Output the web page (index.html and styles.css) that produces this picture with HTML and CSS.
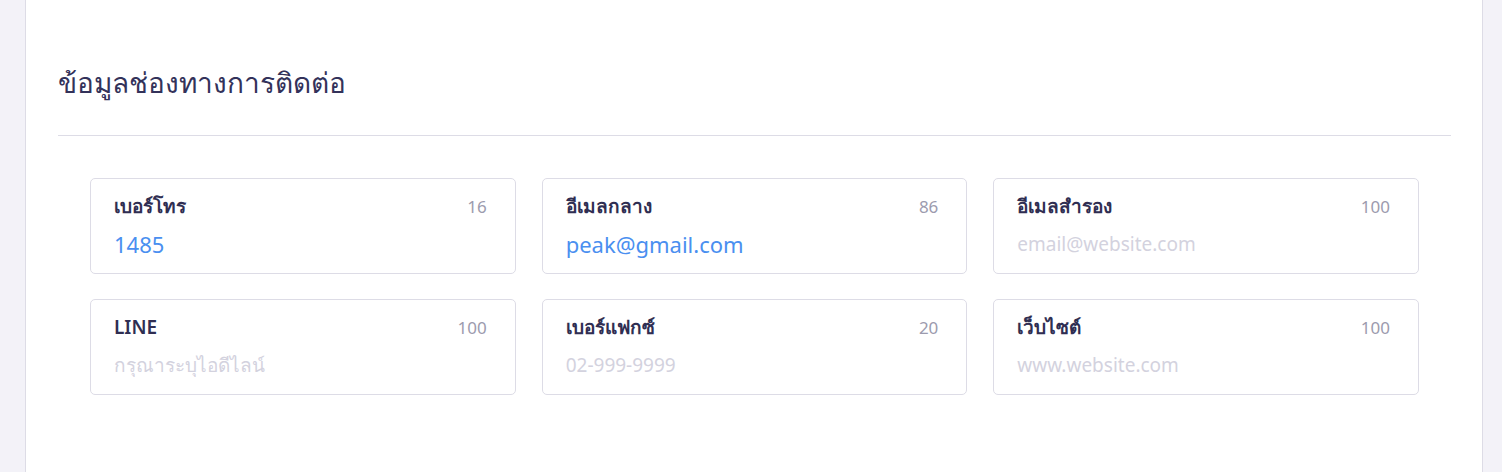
FILE: index.html
```html
<!DOCTYPE html>
<html lang="th">
<head>
  <meta charset="UTF-8" />
  <title>ข้อมูลช่องทางการติดต่อ</title>
  <link rel="stylesheet" href="styles.css">
</head>
<body>
  <div class="page">
    <section class="panel">
      <h2 class="panel-title">ข้อมูลช่องทางการติดต่อ</h2>
      <div class="contact-grid">
        <div class="field">
          <div class="field-head"><span class="field-label">เบอร์โทร</span><span class="field-count">16</span></div>
          <div class="field-value">1485</div>
        </div>
        <div class="field">
          <div class="field-head"><span class="field-label">อีเมลกลาง</span><span class="field-count">86</span></div>
          <div class="field-value">peak@gmail.com</div>
        </div>
        <div class="field">
          <div class="field-head"><span class="field-label">อีเมลสำรอง</span><span class="field-count">100</span></div>
          <div class="field-value empty">email@website.com</div>
        </div>
        <div class="field">
          <div class="field-head"><span class="field-label">LINE</span><span class="field-count">100</span></div>
          <div class="field-value empty">กรุณาระบุไอดีไลน์</div>
        </div>
        <div class="field">
          <div class="field-head"><span class="field-label">เบอร์แฟกซ์</span><span class="field-count">20</span></div>
          <div class="field-value empty">02-999-9999</div>
        </div>
        <div class="field">
          <div class="field-head"><span class="field-label">เว็บไซต์</span><span class="field-count">100</span></div>
          <div class="field-value empty">www.website.com</div>
        </div>
      </div>
    </section>
  </div>
</body>
</html>
```

FILE: styles.css
```css
* {
  margin: 0;
  padding: 0;
  box-sizing: border-box;
}
html, body {
  height: 100%;
  background: #f3f2f8;
  font-family: 'Noto Sans', sans-serif;
  color: #33325a;
  overflow: hidden;
}
.page {
  height: 100%;
  padding: 0 19px 0 25px;
}
.panel {
  height: 100%;
  background: #fff;
  border-left: 1px solid #dddce6;
  border-right: 1px solid #dddce6;
  padding: 62px 31px 0 32px;
}
.panel-title {
  font-size: 28px;
  font-weight: 500;
  line-height: 40px;
  color: #33325a;
  padding-bottom: 33px;
  border-bottom: 1px solid #dddce6;
}
.contact-grid {
  display: grid;
  grid-template-columns: repeat(3, 1fr);
  column-gap: 26px;
  row-gap: 25px;
  padding: 42px 32px 0;
}
.field {
  height: 96px;
  border: 1px solid #dddce6;
  border-radius: 5px;
  padding: 12px 28px 0 23px;
}
.field-head {
  display: flex;
  justify-content: space-between;
  align-items: center;
  height: 30px;
}
.field-label {
  font-size: 19px;
  font-weight: 600;
  color: #2f2e52;
}
.field-count {
  font-size: 17px;
  color: #9c9bae;
}
.field-value {
  margin-top: 8px;
  font-size: 22px;
  line-height: 30px;
  color: #4a8ff0;
}
.field-value.empty {
  font-size: 19px;
  color: #d3d2de;
}
```
